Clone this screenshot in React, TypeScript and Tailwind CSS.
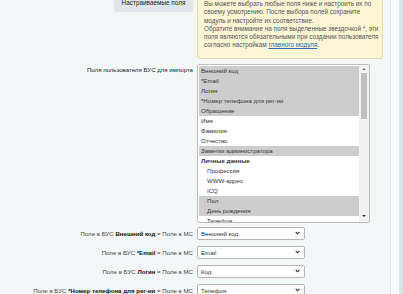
import React from "react";

type Opt = { label: string; selected?: boolean; group?: boolean; indent?: boolean };

const options: Opt[] = [
  { label: "Внешний код", selected: true },
  { label: "*Email", selected: true },
  { label: "Логин", selected: true },
  { label: "*Номер телефона для рег-ии", selected: true },
  { label: "Обращение", selected: true },
  { label: "Имя" },
  { label: "Фамилия" },
  { label: "Отчество" },
  { label: "Заметки администратора", selected: true },
  { label: "Личные данные", group: true },
  { label: "Профессия", indent: true },
  { label: "WWW-адрес", indent: true },
  { label: "ICQ", indent: true },
  { label: "Пол", indent: true, selected: true },
  { label: "День рождения", indent: true, selected: true },
  { label: "Телефон", indent: true },
];

const mappings = [
  { field: "Внешний код", value: "Внешний код" },
  { field: "*Email", value: "Email" },
  { field: "Логин", value: "Код" },
  { field: "*Номер телефона для рег-ии", value: "Телефон" },
];

const noteLines = [
  "Вы можете выбрать любые поля ниже и настроить их по",
  "своему усмотрению. После выбора полей сохраните",
  "модуль и настройте их соответствие.",
  "Обратите внимание на поля выделенные звездочкой *, эти",
  "поля являются обязательными при создании пользователя",
];

const Chevron = () => (
  <svg width="5" height="4" viewBox="0 0 5 4" className="shrink-0">
    <path d="M0.7 1 L2.5 2.8 L4.3 1" fill="none" stroke="#333" strokeWidth="1.1" />
  </svg>
);

export default function App() {
  return (
    <div
      className="flex h-[294px] w-full overflow-hidden bg-[#d9e6e9] text-[6.1px] text-[#333]"
      style={{ fontFamily: '"Liberation Sans", Arial, sans-serif' }}
    >
      <div className="w-[391px] shrink-0 border-r border-[#e3eaeb] bg-[#f3f7f7]">
        {/* intro row */}
        <div className="-mt-[6px] flex">
          <div className="flex w-[197px] shrink-0 justify-end pr-[4px]">
            <div className="mt-[1px] flex h-[17px] w-[79px] items-end justify-center rounded-[3px] bg-[#dfe5e8] pb-[4px] text-[6.4px] text-[#222]">
              Настраиваемые поля
            </div>
          </div>
          <div className="w-[186px] whitespace-nowrap rounded-[3px] border border-[#e6dba4] bg-[#fbf5d6] pt-[5px] pb-[8px] pl-[6px] text-[6.35px] leading-[8.3px] text-[#555]">
            {noteLines.map((l) => (
              <div key={l}>{l}</div>
            ))}
            <div>
              согласно настройкам <a className="text-[#2a6cb3] underline">главного модуля</a>.
            </div>
          </div>
        </div>

        {/* list row */}
        <div className="mt-[5px] flex">
          <div className="w-[197px] shrink-0 pr-[4px] pt-[1px] text-right text-[#222]">
            Поля пользователя БУС для импорта
          </div>
          <div className="flex h-[159px] w-[173px] overflow-hidden rounded-[2px] border border-[#bdbdbd] bg-white">
            <div className="flex-1 pl-[1px] pt-[1px]">
              {options.map((o) => (
                <div
                  key={o.label}
                  className={`h-[10px] whitespace-nowrap leading-[10px] text-[#333] ${
                    o.selected ? "bg-[#cdcdcd]" : ""
                  } ${o.group ? "pl-[2px] font-bold text-[#111]" : o.indent ? "pl-[8px]" : "pl-[2px]"}`}
                >
                  {o.label}
                </div>
              ))}
            </div>
            <div className="flex w-[10px] shrink-0 flex-col items-center bg-[#f1f1f1]">
              <div className="mt-[3px] h-0 w-0 border-x-[2px] border-b-[2px] border-x-transparent border-b-[#777]" />
              <div className="mt-[3px] h-[46px] w-[6px] bg-[#c1c1c1]" />
              <div className="flex-1" />
              <div className="mb-[5px] h-0 w-0 border-x-[2px] border-t-[2px] border-x-transparent border-t-[#333]" />
            </div>
          </div>
        </div>

        {/* mapping rows */}
        <div className="mt-[4px] flex flex-col gap-[6px]">
          {mappings.map((m) => (
            <div key={m.field} className="flex items-center">
              <div className="w-[197px] shrink-0 whitespace-nowrap pr-[4px] text-right text-[#444]">
                Поле в БУС <b className="text-[#111]">{m.field}</b> = Поле в МС
              </div>
              <div className="flex h-[13px] w-[108px] items-center justify-between rounded-[2px] border border-[#b5b5b5] bg-white pl-[3px] pr-[4px] text-[#333]">
                <span>{m.value}</span>
                <Chevron />
              </div>
            </div>
          ))}
        </div>
      </div>
      <div className="w-[8px] shrink-0 bg-[#f8fbfb]" />
    </div>
  );
}
